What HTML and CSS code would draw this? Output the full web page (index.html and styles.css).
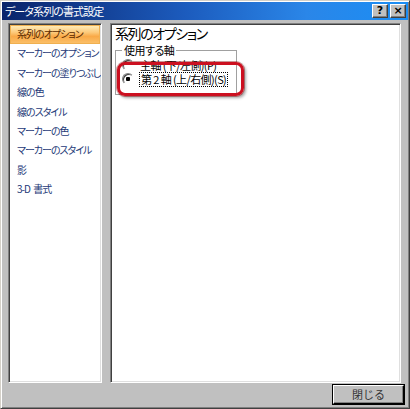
FILE: index.html
```html
<!DOCTYPE html>
<html lang="ja">
  <head>
    <meta charset="UTF-8" />
    <title>データ系列の書式設定</title>
    <link rel="stylesheet" href="styles.css">
  </head>
  <body>
    <!-- Dialog window -->
    <div class="window">
      <!-- Title bar -->
      <div class="title-bar">
        <span class="title">データ系列の書式設定</span>
        <div class="caption-buttons">
          <span class="cap-btn">?</span>
          <span class="cap-btn">×</span>
        </div>
      </div>

      <!-- Category list + options page -->
      <div class="content">
        <div class="panel nav">
          <div class="nav-item selected">系列のオプション</div>
          <div class="nav-item">マーカーのオプション</div>
          <div class="nav-item">マーカーの塗りつぶし</div>
          <div class="nav-item">線の色</div>
          <div class="nav-item">線のスタイル</div>
          <div class="nav-item">マーカーの色</div>
          <div class="nav-item">マーカーのスタイル</div>
          <div class="nav-item">影</div>
          <div class="nav-item">3-D 書式</div>
        </div>

        <div class="panel page">
          <div class="page-title">系列のオプション</div>
          <fieldset class="group">
            <legend>使用する軸</legend>
            <label class="radio-row">
              <span class="radio"></span>
              <span>主軸 (下/左側)(P)</span>
            </label>
            <label class="radio-row">
              <span class="radio checked"></span>
              <span class="focus">第 2 軸 (上/右側)(S)</span>
            </label>
          </fieldset>
          <!-- red annotation drawn over the dialog -->
          <div class="highlight"></div>
        </div>
      </div>

      <!-- Footer -->
      <div class="footer">
        <button class="btn-close">閉じる</button>
      </div>
    </div>
  </body>
</html>
```

FILE: styles.css
```css
/* Reset */
html,
body {
  margin: 0;
  padding: 0;
  background: #ffffff;
  font-family: "Noto Sans CJK JP", "Noto Sans", sans-serif;
  font-size: 11px;
}

/* Dialog frame */
.window {
  width: 410px;
  height: 409px;
  box-sizing: border-box;
  background: #c0c0c0;
  border-top: 1px solid #d4d0c8;
  border-left: 1px solid #d4d0c8;
  border-right: 1px solid #404040;
  border-bottom: 1px solid #404040;
  box-shadow: inset 1px 1px #ffffff, inset -1px -1px #808080;
  padding: 1px;
  display: flex;
  flex-direction: column;
}

/* Title bar */
.title-bar {
  height: 18px;
  display: flex;
  align-items: center;
  justify-content: space-between;
  padding: 0 2px 0 3px;
  background: linear-gradient(90deg, #0a246a 0%, #1c5bbd 45%, #2a86e8 75%, #1b8ef5 100%);
}

.title {
  color: #ffffff;
  font-size: 11px;
  font-feature-settings: "palt";
  letter-spacing: -0.9px;
}

.caption-buttons {
  display: flex;
  gap: 2px;
}

.cap-btn {
  width: 16px;
  height: 14px;
  box-sizing: border-box;
  background: #c0c0c0;
  border-top: 1px solid #ffffff;
  border-left: 1px solid #ffffff;
  border-right: 1px solid #404040;
  border-bottom: 1px solid #404040;
  box-shadow: inset -1px -1px #808080;
  font-family: "DejaVu Sans", sans-serif;
  font-weight: bold;
  font-size: 11px;
  line-height: 12px;
  text-align: center;
  color: #000000;
}

/* Two panels */
.content {
  display: flex;
  gap: 8px;
  margin-top: 3px;
  padding: 0 6px;
}

.panel {
  height: 360px;
  box-sizing: border-box;
  background: #ffffff;
  border-top: 1px solid #808080;
  border-left: 1px solid #808080;
  border-right: 1px solid #ffffff;
  border-bottom: 1px solid #ffffff;
  box-shadow: inset 1px 1px #404040, inset -1px -1px #dfdfdf;
  padding: 1px;
}

.nav {
  width: 94px;
  overflow: hidden;
}

.nav-item {
  height: 19.4px;
  line-height: 18px;
  padding-left: 7px;
  font-size: 10px;
  color: #1e3a78;
  white-space: nowrap;
  font-feature-settings: "palt";
  letter-spacing: -1px;
  word-spacing: 2px;
}

.nav-item.selected {
  background: linear-gradient(#fff0c0 0%, #fcc878 40%, #f9a947 60%, #fbc26c 100%);
  box-shadow: inset 0 0 0 1px #f0b050;
  color: #5a2a00;
}

/* Options page */
.page {
  width: 291px;
  position: relative;
}

.page-title {
  padding-left: 3px;
  font-size: 14px;
  line-height: 17px;
  color: #000000;
  font-feature-settings: "palt";
  letter-spacing: -1.4px;
}

.group {
  width: 122px;
  box-sizing: border-box;
  margin: 2px 0 0 3px;
  padding: 1px 0 8px 6px;
  border: 1px solid #a0a0a0;
}

.group legend {
  padding: 0 2px;
  margin-left: 0;
  line-height: 13px;
  font-feature-settings: "palt";
  letter-spacing: -0.5px;
}

.radio-row {
  height: 14px;
  line-height: 13px;
  display: flex;
  align-items: center;
  gap: 6px;
  white-space: nowrap;
  font-feature-settings: "palt";
  letter-spacing: -0.6px;
}

.radio {
  width: 12px;
  height: 12px;
  box-sizing: border-box;
  border-radius: 50%;
  background: #ffffff;
  border: 1px solid;
  border-color: #808080 #ffffff #ffffff #808080;
  box-shadow: inset 1px 1px #404040;
  flex: none;
}

.radio.checked {
  background: radial-gradient(circle, #000000 0 2px, #ffffff 2.5px);
}

.focus {
  outline: 1px dotted #000000;
  outline-offset: 0;
  padding: 0 1px;
}

/* Red annotation ring */
.highlight {
  position: absolute;
  left: 6px;
  top: 38px;
  width: 127px;
  height: 34px;
  box-sizing: border-box;
  border: 3px solid #cc1020;
  border-radius: 8px;
  box-shadow: 0 0 0 1px rgba(130, 0, 0, 0.4), 2px 2px 3px rgba(0, 0, 0, 0.35);
}

/* Footer */
.footer {
  display: flex;
  justify-content: flex-end;
  padding: 2px 4px 0 0;
}

.btn-close {
  width: 71px;
  height: 19px;
  box-sizing: border-box;
  background: #c0c0c0;
  border-top: 1px solid #ffffff;
  border-left: 1px solid #ffffff;
  border-right: 1px solid #000000;
  border-bottom: 1px solid #000000;
  box-shadow: inset -1px -1px #808080, 0 0 0 1px #000000;
  font-family: "Noto Sans CJK JP", sans-serif;
  font-size: 11px;
  line-height: 15px;
  padding: 0;
  color: #333333;
}
```
